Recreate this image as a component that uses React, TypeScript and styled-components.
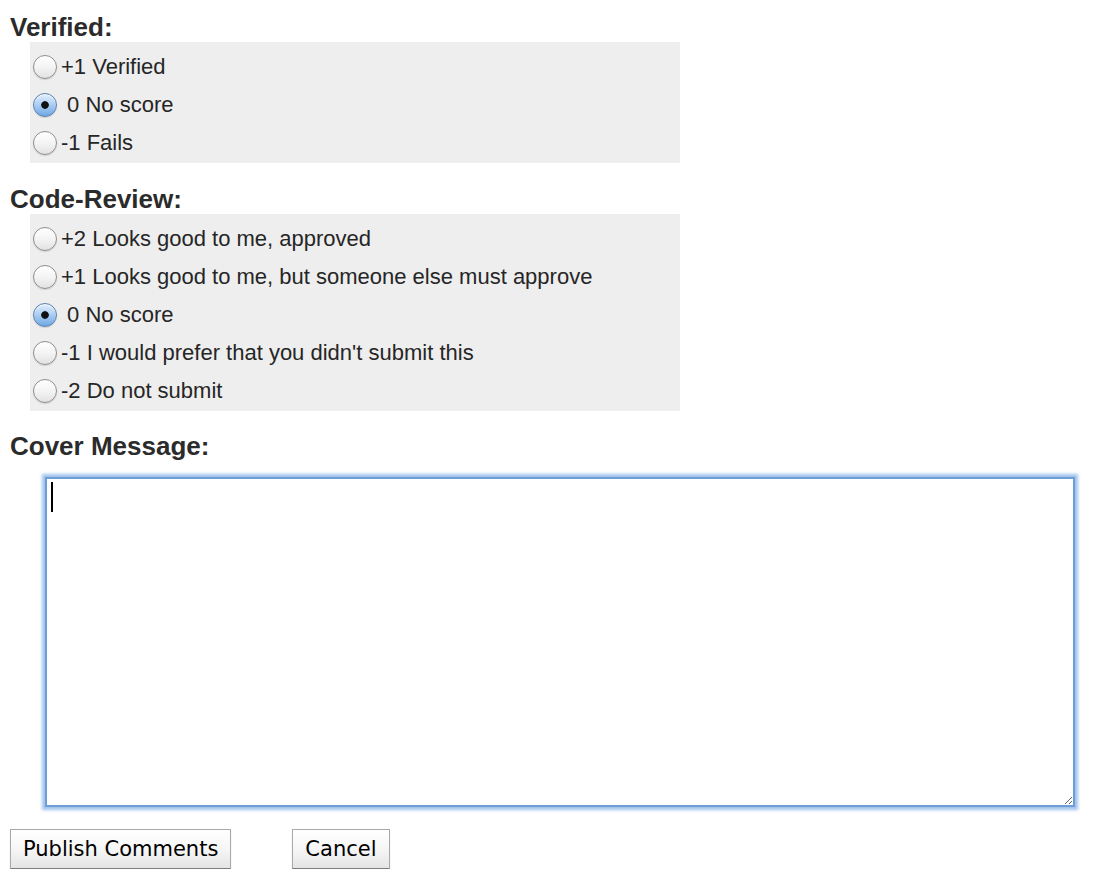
import React from "react";
import styled, { createGlobalStyle } from "styled-components";

const GlobalStyle = createGlobalStyle`
  html, body {
    margin: 0;
    padding: 0;
    background: #ffffff;
    font-family: "Liberation Sans", Arial, Helvetica, sans-serif;
  }
`;

const Page = styled.div`
  padding: 12px 0 0 10px;
`;

const SectionTitle = styled.div<{ $top?: number }>`
  margin-top: ${(p) => p.$top ?? 0}px;
  font-weight: 700;
  font-size: 26px;
  line-height: 30px;
  color: #2b2b2b;
`;

const OptionBox = styled.div`
  margin-left: 20px;
  width: 647px;
  padding: 5px 0 2px 3px;
  background: #eeeeee;
`;

const OptionRow = styled.label`
  display: flex;
  align-items: center;
  height: 38px;
  font-size: 22px;
  color: #262626;
  cursor: default;
`;

const Radio = styled.input.attrs({ type: "radio" })`
  appearance: none;
  -webkit-appearance: none;
  box-sizing: border-box;
  width: 24px;
  height: 24px;
  margin: 1px 4px 0 0;
  border-radius: 50%;
  border: 1px solid #8e8e8e;
  background: linear-gradient(#ffffff 0%, #f4f4f4 50%, #e2e2e2 100%);
  box-shadow: inset 0 1px 1px rgba(255, 255, 255, 0.9), 0 1px 1px rgba(0, 0, 0, 0.12);
  flex: none;

  &:checked {
    border-color: #5a7fae;
    background: radial-gradient(circle, #111 0, #111 3.4px, transparent 4.2px),
      linear-gradient(#e3effc 0%, #a9cdf3 50%, #6fa7e4 100%);
  }
`;

const OptionText = styled.span`
  white-space: pre;
  padding-top: 1px;
`;

const CoverArea = styled.div`
  position: relative;
  width: 1030px;
  margin: 16px 0 0 35px;
`;

const MessageInput = styled.textarea`
  display: block;
  box-sizing: border-box;
  width: 100%;
  height: 330px;
  margin: 0;
  padding: 4px;
  border: 2px solid #6e9ed8;
  border-radius: 0;
  outline: none;
  box-shadow: 0 0 3px 3px rgba(120, 168, 225, 0.7);
  font-family: "Liberation Sans", Arial, sans-serif;
  font-size: 22px;
  background: #ffffff;
`;

const Caret = styled.span`
  position: absolute;
  left: 6px;
  top: 5px;
  width: 2px;
  height: 30px;
  background: #000;
`;

const ButtonRow = styled.div`
  display: flex;
  gap: 61px;
  margin-top: 22px;
`;

const Button = styled.button`
  box-sizing: border-box;
  height: 40px;
  padding: 0 12px;
  font-family: "DejaVu Sans", "Lucida Grande", Verdana, sans-serif;
  font-size: 21px;
  color: #000;
  border: 1px solid #a9a9a9;
  border-bottom-color: #7c7c7c;
  border-radius: 0;
  background: linear-gradient(#ffffff 0%, #f6f6f6 50%, #e4e4e4 100%);
  box-shadow: 0 1px 1px rgba(0, 0, 0, 0.18);
  cursor: default;
`;

type Option = { label: string; checked?: boolean };

const verified: Option[] = [
  { label: "+1 Verified" },
  { label: " 0 No score", checked: true },
  { label: "-1 Fails" },
];

const codeReview: Option[] = [
  { label: "+2 Looks good to me, approved" },
  { label: "+1 Looks good to me, but someone else must approve" },
  { label: " 0 No score", checked: true },
  { label: "-1 I would prefer that you didn't submit this" },
  { label: "-2 Do not submit" },
];

function OptionGroup({ name, options }: { name: string; options: Option[] }) {
  return (
    <OptionBox>
      {options.map((o) => (
        <OptionRow key={o.label}>
          <Radio name={name} defaultChecked={o.checked} />
          <OptionText>{o.label}</OptionText>
        </OptionRow>
      ))}
    </OptionBox>
  );
}

export default function App() {
  return (
    <Page>
      <GlobalStyle />
      <SectionTitle>Verified:</SectionTitle>
      <OptionGroup name="verified" options={verified} />
      <SectionTitle $top={21}>Code-Review:</SectionTitle>
      <OptionGroup name="code-review" options={codeReview} />
      <SectionTitle $top={20}>Cover Message:</SectionTitle>
      <CoverArea>
        <MessageInput />
        <Caret />
      </CoverArea>
      <ButtonRow>
        <Button>Publish Comments</Button>
        <Button>Cancel</Button>
      </ButtonRow>
    </Page>
  );
}
